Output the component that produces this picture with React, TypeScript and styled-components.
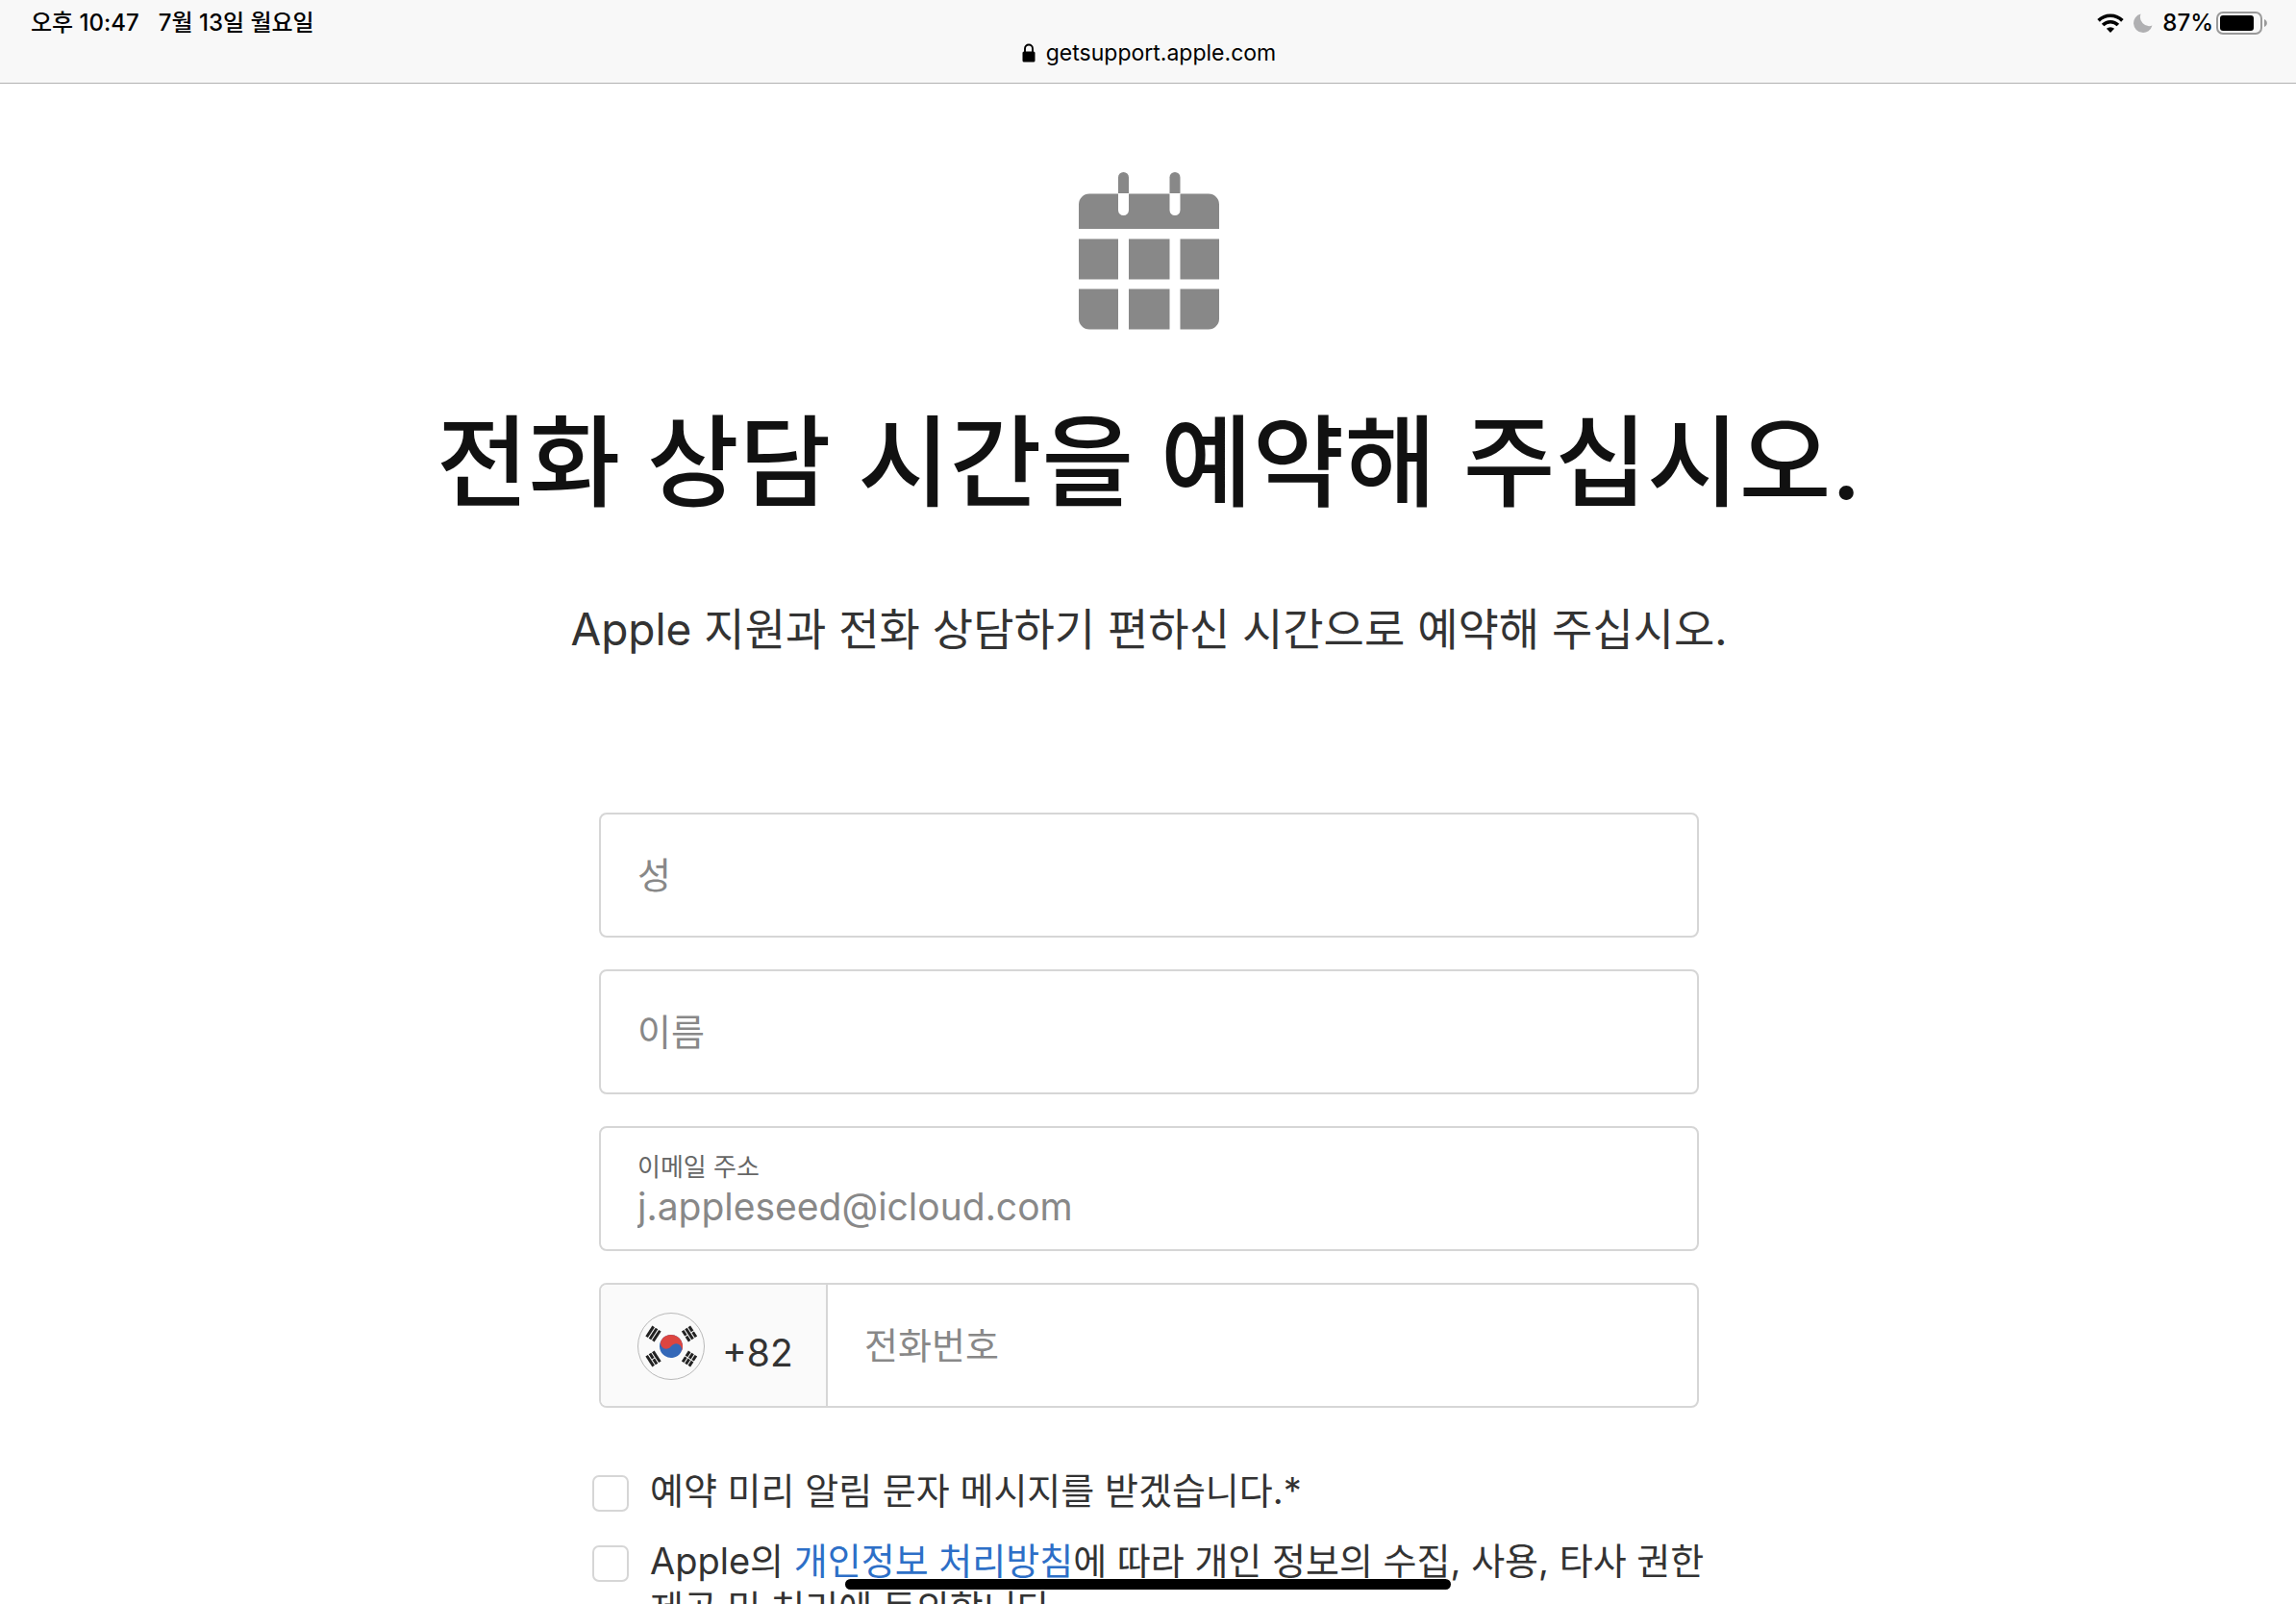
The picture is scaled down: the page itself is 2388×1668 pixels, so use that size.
import React from "react";
import styled, { createGlobalStyle } from "styled-components";

const GlobalStyle = createGlobalStyle`
  *, *::before, *::after { box-sizing: border-box; }
  body {
    margin: 0;
    background: #fff;
    color: #333;
    font-family: Inter, "Noto Sans CJK KR", sans-serif;
  }
  button, input { font: inherit; color: inherit; }
`;

const Screen = styled.div`
  height: 100vh;
  overflow: hidden;
  display: flex;
  flex-direction: column;
`;

const BrowserBar = styled.header`
  flex: none;
  height: 87px;
  padding: 8px 30px 0 32px;
  background: #f8f8f8;
  border-bottom: 1px solid #b2b2b2;
  color: #000;
`;

const StatusRow = styled.div`
  display: flex;
  justify-content: space-between;
  align-items: center;
  height: 32px;
  font-size: 24px;
  line-height: 32px;
  font-weight: 500;
`;

const StatusGroup = styled.div<{ $gap: number }>`
  display: flex;
  align-items: center;
  gap: ${(p) => p.$gap}px;
`;

const AddressRow = styled.div`
  display: flex;
  justify-content: center;
  align-items: center;
  gap: 11px;
  font-size: 23px;
  line-height: 30px;
`;

const Content = styled.main`
  flex: 1;
  min-height: 0;
  overflow: hidden;
  display: flex;
  flex-direction: column;
  align-items: center;
  padding: 92px 22px 0 24px;
`;

const CalendarDrawing = styled.svg`
  flex: none;
  display: block;
  width: 146px;
  height: 164px;
  fill: #888;
`;

const Title = styled.h1`
  margin: 76px 0 0;
  color: #111;
  font-size: 104px;
  line-height: 124px;
  font-weight: 500;
  text-align: center;
`;

const Subtitle = styled.p`
  margin: 83px 0 0;
  font-size: 46px;
  line-height: 56px;
  text-align: center;
`;

const Form = styled.form`
  width: 100%;
  max-width: 1158px;
  margin-top: 163px;
`;

const Fields = styled.div`
  display: flex;
  flex-direction: column;
  gap: 33px;
  padding: 0 7px;
`;

const Field = styled.div`
  display: flex;
  flex-direction: column;
  justify-content: center;
  height: 130px;
  border: 2px solid #d6d6d6;
  border-radius: 8px;
  overflow: hidden;
`;

const PhoneField = styled(Field)`
  flex-direction: row;
  justify-content: flex-start;
`;

const FieldLabel = styled.label`
  padding: 2px 38px 0;
  color: #666;
  font-size: 26px;
  line-height: 34px;
`;

const TextInput = styled.input<{ $compact?: boolean }>`
  flex: ${(p) => (p.$compact ? "none" : "1")};
  width: 100%;
  min-width: 0;
  height: ${(p) => (p.$compact ? "46px" : "auto")};
  padding: 0 38px;
  border: 0;
  outline: 0;
  background: transparent;
  font-size: ${(p) => (p.$compact ? 39 : 38)}px;
  &::placeholder { color: #888; opacity: 1; }
`;

const CountryButton = styled.button`
  flex: none;
  display: flex;
  align-items: center;
  gap: 18px;
  width: 236px;
  padding: 2px 0 0 38px;
  border: 0;
  border-right: 2px solid #d6d6d6;
  background: #fafafa;
  font-size: 39px;
  line-height: 48px;
`;

const DialCode = styled.span`
  padding-top: 14px;
`;

const Consents = styled.div`
  display: flex;
  flex-direction: column;
  gap: 24px;
  margin: 62px -20px 0 0;
`;

const Consent = styled.div`
  display: flex;
  align-items: flex-start;
  gap: 22px;
`;

const Checkbox = styled.input`
  appearance: none;
  flex: none;
  width: 38px;
  height: 38px;
  margin: 8px 0 0;
  border: 2px solid #d6d6d6;
  border-radius: 7px;
  background: #fff;
  &:checked { background: #2d6fc7; }
`;

const ConsentLabel = styled.label`
  font-size: 38px;
  line-height: 49px;
  word-break: keep-all;
`;

const Link = styled.a`
  color: #2d6fc7;
  text-decoration: none;
`;

const HomeIndicator = styled.div`
  position: fixed;
  left: 50%;
  bottom: 15px;
  width: 630px;
  height: 11px;
  margin-left: -315px;
  border-radius: 6px;
  background: #000;
`;

const WifiIcon = () => (
  <svg width="28" height="20" viewBox="0 0 28 20" aria-hidden="true">
    <g fill="none" stroke="#000" strokeWidth="3.6">
      <path d="M1.6 7.4a17.6 17.6 0 0 1 24.8 0" />
      <path d="M6.1 12a11.2 11.2 0 0 1 15.8 0" />
    </g>
    <path d="M14 20l-4.1-4.2a5.9 5.9 0 0 1 8.2 0z" />
  </svg>
);

const MoonIcon = () => (
  <svg width="20" height="20" viewBox="0 0 20 20" aria-hidden="true">
    <path fill="#b0b0b2" d="M7.6.4A9.9 9.9 0 1 0 19.5 12.6A9.4 9.4 0 0 1 7.6.4z" />
  </svg>
);

const BatteryIcon = () => (
  <svg width="53" height="24" viewBox="0 0 53 24" aria-hidden="true">
    <rect x="1" y="1" width="46" height="22" rx="6" fill="none" stroke="#9a9a9a" strokeWidth="2" />
    <rect x="4" y="4" width="35" height="16" rx="3" />
    <path fill="#9a9a9a" d="M50 8c3.8 1.5 3.8 6.5 0 8z" />
  </svg>
);

const LockIcon = () => (
  <svg width="14" height="20" viewBox="0 0 14 20" aria-hidden="true">
    <rect x="0.5" y="8.5" width="13" height="11" rx="1.6" />
    <path d="M3 9V5.5a4 4 0 0 1 8 0V9" fill="none" stroke="#000" strokeWidth="1.9" />
  </svg>
);

const CalendarIcon = () => (
  <CalendarDrawing viewBox="0 0 146 164" role="img" aria-label="달력">
    <path d="M41 22V5.5a5.5 5.5 0 0 1 11 0V22z" />
    <path d="M94.5 22V5.5a5.5 5.5 0 0 1 11 0V22z" />
    <path d="M11 22.5H41V39.5a5.5 5.5 0 0 0 11 0V22.5H94.5V39.5a5.5 5.5 0 0 0 11 0V22.5H135A11 11 0 0 1 146 33.5V59H0V33.5A11 11 0 0 1 11 22.5z" />
    <path d="M0 69.5h41v42H0zM52 69.5h42.5v42H52zM105.5 69.5H146v42h-40.5z" />
    <path d="M0 121.5h41V163.5H11a11 11 0 0 1-11-11zM52 121.5h42.5v42H52zM105.5 121.5H146v31a11 11 0 0 1-11 11h-29.5z" />
  </CalendarDrawing>
);

type TrigramProps = { x: number; y: number; angle: number; broken: boolean[] };

const Trigram = ({ x, y, angle, broken }: TrigramProps) => (
  <g transform={`translate(${x} ${y}) rotate(${angle})`} fill="#222">
    {broken.map((isBroken, i) =>
      isBroken ? (
        <path key={i} d={`M-6.5 ${i * 4 - 5.5}h6v3h-6zM.5 ${i * 4 - 5.5}h6v3h-6z`} />
      ) : (
        <path key={i} d={`M-6.5 ${i * 4 - 5.5}h13v3h-13z`} />
      )
    )}
  </g>
);

const KoreaFlag = () => (
  <svg width="70" height="70" viewBox="0 0 70 70" role="img" aria-label="대한민국">
    <circle cx="35" cy="35" r="34.5" fill="#fafafa" stroke="#b8b8b8" />
    <g transform="rotate(33 35 35)">
      <circle cx="35" cy="35" r="12" fill="#3468b8" />
      <path fill="#dc4540" d="M23 35a12 12 0 0 1 24 0a6 6 0 0 0-12 0a6 6 0 0 1-12 0z" />
    </g>
    <Trigram x={16.5} y={22} angle={-57} broken={[false, false, false]} />
    <Trigram x={54} y={22} angle={57} broken={[true, false, true]} />
    <Trigram x={16.5} y={48} angle={57} broken={[false, true, false]} />
    <Trigram x={54} y={48} angle={-57} broken={[true, true, true]} />
  </svg>
);

export default function App() {
  return (
    <Screen>
      <GlobalStyle />
      <BrowserBar>
        <StatusRow>
          <StatusGroup $gap={20}>
            <span>오후 10:47</span>
            <span>7월 13일 월요일</span>
          </StatusGroup>
          <StatusGroup $gap={10}>
            <WifiIcon />
            <MoonIcon />
            <StatusGroup $gap={3}>
              <span>87%</span>
              <BatteryIcon />
            </StatusGroup>
          </StatusGroup>
        </StatusRow>
        <AddressRow>
          <LockIcon />
          <span>getsupport.apple.com</span>
        </AddressRow>
      </BrowserBar>

      <Content>
        <CalendarIcon />
        <Title>전화 상담 시간을 예약해 주십시오.</Title>
        <Subtitle>Apple 지원과 전화 상담하기 편하신 시간으로 예약해 주십시오.</Subtitle>

        <Form>
          <Fields>
            <Field>
              <TextInput id="last-name" placeholder="성" aria-label="성" />
            </Field>
            <Field>
              <TextInput id="first-name" placeholder="이름" aria-label="이름" />
            </Field>
            <Field>
              <FieldLabel htmlFor="email">이메일 주소</FieldLabel>
              <TextInput id="email" type="email" $compact placeholder="j.appleseed@icloud.com" />
            </Field>
            <PhoneField>
              <CountryButton type="button">
                <KoreaFlag />
                <DialCode>+82</DialCode>
              </CountryButton>
              <TextInput id="phone" type="tel" placeholder="전화번호" aria-label="전화번호" />
            </PhoneField>
          </Fields>

          <Consents>
            <Consent>
              <Checkbox type="checkbox" id="sms" />
              <ConsentLabel htmlFor="sms">예약 미리 알림 문자 메시지를 받겠습니다.*</ConsentLabel>
            </Consent>
            <Consent>
              <Checkbox type="checkbox" id="privacy" />
              <ConsentLabel htmlFor="privacy">
                Apple의 <Link href="#privacy">개인정보 처리방침</Link>에 따라 개인 정보의 수집, 사용, 타사 권한 제공 및 처리에 동의합니다.
              </ConsentLabel>
            </Consent>
          </Consents>
        </Form>
      </Content>
      <HomeIndicator />
    </Screen>
  );
}
